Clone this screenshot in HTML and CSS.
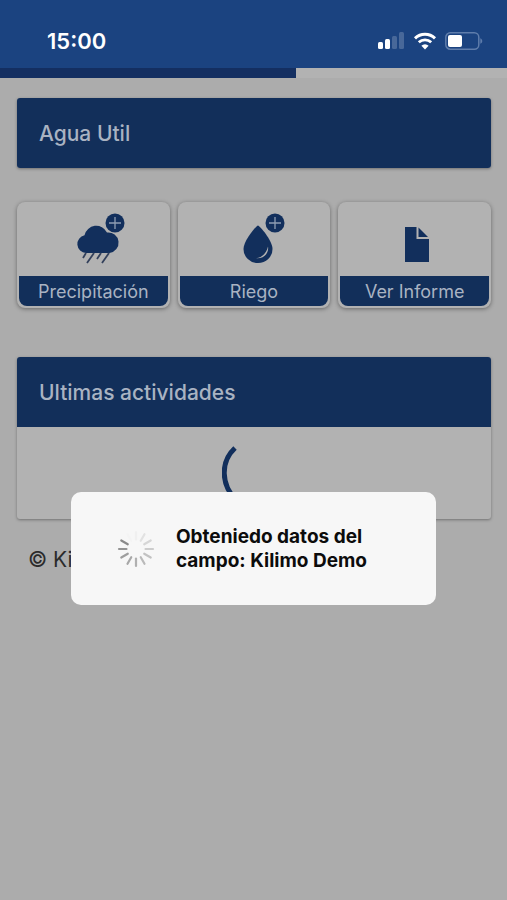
FILE: index.html
```html
<!DOCTYPE html>
<html lang="es">
<head>
    <meta charset="UTF-8">
    <meta name="viewport" content="width=device-width, initial-scale=1.0">
    <title>Kilimo</title>
    <link rel="stylesheet" href="styles.css">
</head>
<body>
    <!-- Status bar -->
    <header class="status-bar">
        <span class="clock">15:00</span>
        <div class="status-icons">
            <svg class="icon-signal" width="28" height="18" viewBox="0 0 28 18" fill="#fff">
                <rect x="1" y="10" width="5" height="7" rx="1.5"/>
                <rect x="8" y="7" width="5" height="10" rx="1.5"/>
                <rect x="15" y="4" width="5" height="13" rx="1.5" opacity="0.2"/>
                <rect x="22" y="0" width="5" height="17" rx="1.5" opacity="0.2"/>
            </svg>
            <svg class="icon-wifi" width="24" height="18" viewBox="0 0 24 18">
                <path d="M2 6.3a14.6 14.6 0 0 1 20 0" fill="none" stroke="#fff" stroke-width="3"/>
                <path d="M5.8 10.3a9 9 0 0 1 12.4 0" fill="none" stroke="#fff" stroke-width="2.8"/>
                <path d="M12 17.4l-3.6-3.7a5 5 0 0 1 7.2 0z" fill="#fff"/>
            </svg>
            <svg class="icon-battery" width="38" height="18" viewBox="0 0 38 18">
                <rect x="0.8" y="0.8" width="33" height="16.4" rx="4.5" fill="none" stroke="#5f7dab" stroke-width="1.5"/>
                <rect x="3" y="3" width="14" height="12" rx="2" fill="#fff"/>
                <path d="M35.3 6.2c2.6 1 2.6 4.6 0 5.6z" fill="#5f7dab"/>
            </svg>
        </div>
    </header>
    <div class="progress">
        <div class="progress-bar"></div>
    </div>

    <!-- Main Content Section -->
    <main class="content">
        <section class="card">
            <h2 class="card-title">Agua Util</h2>
        </section>

        <div class="actions">
            <button type="button" class="action">
                <span class="action-icon">
                    <svg width="72" height="56" viewBox="-12 0 72 56">
                        <path d="M17 41a9 9 0 0 1-1.500-17.800a12 12 0 0 1 22.500-2.700a10.300 10.300 0 0 1 2.500 20.500z" fill="#122f5c"/>
                        <path d="M17 41l-3 5M25 41l-7 10M32 41l-4 6M40 41l-7 10" stroke="#33415c" stroke-width="1.800"/>
                        <circle cx="46" cy="11" r="9.500" fill="#122f5c"/>
                        <path d="M46 5v12M40 11h12" stroke="#8f9db3" stroke-width="1.300"/>
                    </svg>
                </span>
                <span class="action-label">Precipitación</span>
            </button>
            <button type="button" class="action">
                <span class="action-icon">
                    <svg width="72" height="56" viewBox="-11 0 72 56">
                        <path d="M29 13.500c-1.500 0-14.500 15-14.500 23.500a14.500 14 0 0 0 29 0c0-8.500-13-23.500-14.500-23.500z" fill="#122f5c"/>
                        <path d="M39 34.500c1.200 7-4.500 12.500-12 11.800c6-.8 10.500-5 12-11.800z" fill="#b2b2b2"/>
                        <circle cx="46" cy="11" r="9.500" fill="#122f5c"/>
                        <path d="M46 5v12M40 11h12" stroke="#8f9db3" stroke-width="1.300"/>
                    </svg>
                </span>
                <span class="action-label">Riego</span>
            </button>
            <button type="button" class="action">
                <span class="action-icon">
                    <svg width="72" height="56" viewBox="-8 0 72 56">
                        <path d="M18 15h11.500v12H42v23H18z" fill="#122f5c"/>
                        <path d="M31.500 15.500v9.500h9.500z" fill="#122f5c"/>
                    </svg>
                </span>
                <span class="action-label">Ver Informe</span>
            </button>
        </div>

        <section class="card">
            <h2 class="card-title">Ultimas actividades</h2>
            <div class="card-body">
                <svg width="64" height="64" viewBox="0 0 64 64">
                    <path d="M13 3C-2 17-1 40 14 55" fill="none" stroke="#122f5c" stroke-width="5"/>
                </svg>
            </div>
        </section>
    </main>

    <footer class="footer">© Kilimo</footer>

    <!-- Loading dialog -->
    <div class="loading" role="alertdialog" aria-labelledby="loading-text">
        <svg class="loading-spinner" width="38" height="38" viewBox="-19 -19 38 38" stroke-width="2.200" stroke-linecap="round">
            <path d="M0-9.500V-17" stroke="#f0f0f0"/>
            <path d="M0-9.500V-17" stroke="#e2e2e2" transform="rotate(30)"/>
            <path d="M0-9.500V-17" stroke="#d6d6d6" transform="rotate(60)"/>
            <path d="M0-9.500V-17" stroke="#cccccc" transform="rotate(90)"/>
            <path d="M0-9.500V-17" stroke="#c2c2c2" transform="rotate(120)"/>
            <path d="M0-9.500V-17" stroke="#bababa" transform="rotate(150)"/>
            <path d="M0-9.500V-17" stroke="#b0b0b0" transform="rotate(180)"/>
            <path d="M0-9.500V-17" stroke="#a8a8a8" transform="rotate(210)"/>
            <path d="M0-9.500V-17" stroke="#9e9e9e" transform="rotate(240)"/>
            <path d="M0-9.500V-17" stroke="#949494" transform="rotate(270)"/>
            <path d="M0-9.500V-17" stroke="#8a8a8a" transform="rotate(300)"/>
            <path d="M0-9.500V-17" stroke="#f4f4f4" transform="rotate(330)"/>
        </svg>
        <p class="loading-text" id="loading-text">Obteniedo datos del campo: Kilimo Demo</p>
    </div>
</body>
</html>
```
FILE: styles.css
```css
/* Basic Reset */
* {
    margin: 0;
    padding: 0;
    box-sizing: border-box;
}

body {
    font-family: Inter, 'Liberation Sans', sans-serif;
    background-color: #acacac;
    color: #2b2b2b;
    min-height: 100vh;
}

.status-bar {
    display: flex;
    justify-content: space-between;
    align-items: flex-end;
    height: 68px;
    padding: 0 24px 14px 47px;
    background-color: #1b4380;
}

.clock {
    color: #fff;
    font-size: 22px;
    font-weight: 600;
    line-height: 26px;
}

.status-icons {
    display: flex;
    align-items: center;
    gap: 8px;
    height: 26px;
}

.progress {
    height: 10px;
    background-color: #b2b2b2;
}

.progress-bar {
    width: 58.4%;
    height: 100%;
    background-color: #142f61;
}

.content {
    display: flex;
    flex-direction: column;
    padding: 20px 16px 0 17px;
}

.card {
    border-radius: 3px;
    background-color: #b2b2b2;
    box-shadow: 0 1px 3px rgba(0, 0, 0, 0.35);
    overflow: hidden;
}

.card-title {
    padding: 23px 22px 21px;
    background-color: #122f5a;
    color: #a9b3c2;
    font-size: 21px;
    font-weight: 500;
    line-height: 26px;
}

.card-body {
    display: flex;
    justify-content: center;
    height: 92px;
    padding-top: 18px;
}

.actions {
    display: grid;
    grid-template-columns: repeat(3, 1fr);
    gap: 8px;
    margin: 34px 0 49px;
}

.action {
    display: flex;
    flex-direction: column;
    padding: 2px;
    border: none;
    border-radius: 8px;
    background-color: #b2b2b2;
    box-shadow: 0 1px 4px rgba(0, 0, 0, 0.4);
    font-family: inherit;
    cursor: pointer;
}

.action-icon {
    display: flex;
    justify-content: center;
    width: 100%;
    height: 72px;
    padding-top: 8px;
}

.action-label {
    width: 100%;
    padding-top: 1px;
    border-radius: 0 0 8px 8px;
    background-color: #122f5a;
    color: #a9b3c2;
    font-size: 18px;
    line-height: 29px;
}

.footer {
    padding: 28px;
    font-size: 21px;
    line-height: 26px;
}

/* Sits over the page content */
.loading {
    position: absolute;
    top: 492px;
    left: 14%;
    right: 14%;
    display: flex;
    align-items: center;
    gap: 21px;
    padding: 33px 46px 32px;
    border-radius: 10px;
    background-color: #f7f7f7;
}

.loading-spinner {
    flex-shrink: 0;
}

.loading-text {
    color: #0c0c0c;
    font-size: 19px;
    font-weight: 700;
    line-height: 24px;
}
```
